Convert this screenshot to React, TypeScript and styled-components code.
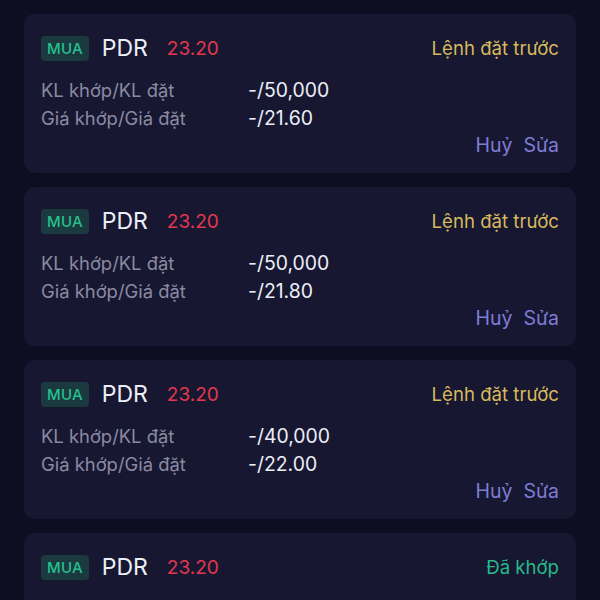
import React from 'react'
import styled, { createGlobalStyle } from 'styled-components'

const GlobalStyle = createGlobalStyle`
  html, body {
    margin: 0;
    padding: 0;
    background: #0e0e22;
  }
  body {
    font-family: Inter, "Noto Sans", sans-serif;
    -webkit-font-smoothing: antialiased;
  }
`

type OrderStatus = 'pending' | 'matched'

interface Order {
  side: string
  symbol: string
  price: string
  status: OrderStatus
  volume?: string
  orderPrice?: string
}

const orders: Order[] = [
  { side: 'MUA', symbol: 'PDR', price: '23.20', status: 'pending', volume: '-/50,000', orderPrice: '-/21.60' },
  { side: 'MUA', symbol: 'PDR', price: '23.20', status: 'pending', volume: '-/50,000', orderPrice: '-/21.80' },
  { side: 'MUA', symbol: 'PDR', price: '23.20', status: 'pending', volume: '-/40,000', orderPrice: '-/22.00' },
  { side: 'MUA', symbol: 'PDR', price: '23.20', status: 'matched' },
]

const Page = styled.div`
  height: 600px;
  overflow: hidden;
  padding: 14px 24px 0;
  box-sizing: border-box;
  display: flex;
  flex-direction: column;
  gap: 14px;
`

const Card = styled.div`
  flex-shrink: 0;
  background: #171731;
  border-radius: 11px;
  padding: 20px 17px 16px 17px;
  min-height: 123px;
  display: flex;
  flex-direction: column;
`

const Header = styled.div`
  height: 28px;
  display: flex;
  align-items: center;
`

const SideBadge = styled.span`
  height: 25px;
  padding: 0 6px;
  border-radius: 4px;
  background: #1b3a3f;
  color: #27bf8e;
  font-size: 15px;
  font-weight: 500;
  display: flex;
  align-items: center;
  letter-spacing: 0.2px;
`

const Symbol = styled.span`
  margin-left: 13px;
  color: #eceef6;
  font-size: 23px;
  font-weight: 400;
`

const Price = styled.span`
  margin-left: 19px;
  color: #e3374f;
  font-size: 19px;
`

const Status = styled.span<{ $matched?: boolean }>`
  margin-left: auto;
  color: ${({ $matched }) => ($matched ? '#27b98a' : '#d6ba5c')};
  font-size: 18.6px;
`

const Details = styled.div`
  margin-top: 14px;
  display: grid;
  grid-template-columns: 207px 1fr;
  grid-auto-rows: 28px;
  align-items: center;
`

const Label = styled.span`
  color: #8a8aa2;
  font-size: 18.4px;
`

const Value = styled.span`
  color: #eceef6;
  font-size: 19.4px;
`

const Actions = styled.div`
  margin-top: 1px;
  height: 24px;
  display: flex;
  justify-content: flex-end;
  align-items: center;
  gap: 11px;
`

const ActionButton = styled.button`
  background: none;
  border: none;
  padding: 0;
  color: #7d7dd6;
  font-family: inherit;
  font-size: 19.5px;
  cursor: pointer;
`

export default function App(): JSX.Element {
  return (
    <>
      <GlobalStyle />
      <Page>
        {orders.map((order, i) => (
          <Card key={i}>
            <Header>
              <SideBadge>{order.side}</SideBadge>
              <Symbol>{order.symbol}</Symbol>
              <Price>{order.price}</Price>
              <Status $matched={order.status === 'matched'}>
                {order.status === 'matched' ? 'Đã khớp' : 'Lệnh đặt trước'}
              </Status>
            </Header>
            {order.volume && (
              <Details>
                <Label>KL khớp/KL đặt</Label>
                <Value>{order.volume}</Value>
                <Label>Giá khớp/Giá đặt</Label>
                <Value>{order.orderPrice}</Value>
              </Details>
            )}
            {order.status === 'pending' && (
              <Actions>
                <ActionButton>Huỷ</ActionButton>
                <ActionButton>Sửa</ActionButton>
              </Actions>
            )}
          </Card>
        ))}
      </Page>
    </>
  )
}
